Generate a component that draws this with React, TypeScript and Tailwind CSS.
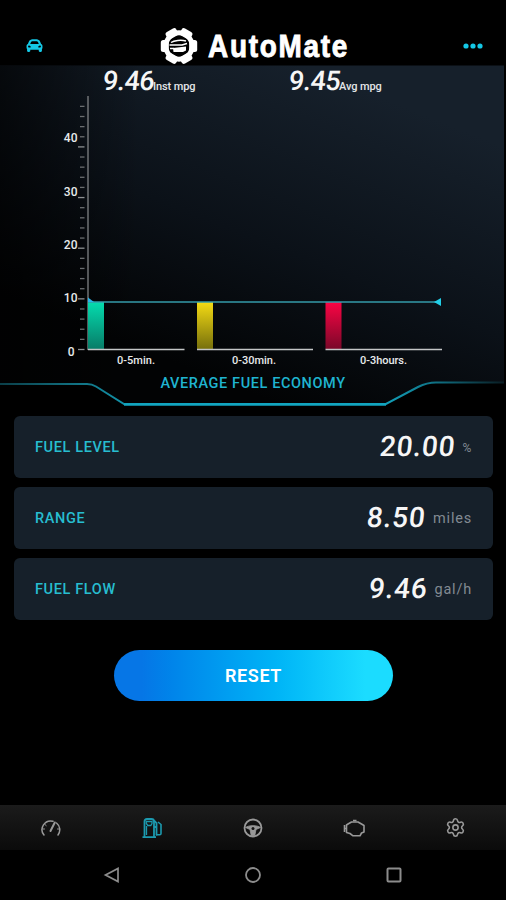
import type { ReactNode } from 'react';
import clsx from 'clsx';
import { FaCarAlt } from 'react-icons/fa';
import { Settings } from 'lucide-react';

type Stat = {
    label: string;
    value: string;
    unit: string;
};

type Bar = {
    label: string;
    x: number;
    end: number;
    labelX: number;
    labelWidth: number;
    fill: string;
};

const stats: Stat[] = [
    { label: 'FUEL LEVEL', value: '20.00', unit: '%' },
    { label: 'RANGE', value: '8.50', unit: 'miles' },
    { label: 'FUEL FLOW', value: '9.46', unit: 'gal/h' },
];

const bars: Bar[] = [
    { label: '0-5min.', x: 88, end: 184.5, labelX: 117, labelWidth: 38, fill: 'url(#barGreen)' },
    { label: '0-30min.', x: 197, end: 313, labelX: 232, labelWidth: 44, fill: 'url(#barYellow)' },
    { label: '0-3hours.', x: 325.5, end: 442, labelX: 360, labelWidth: 47, fill: 'url(#barRed)' },
];

const scale = [
    { value: '40', y: 76.5 },
    { value: '30', y: 130.5 },
    { value: '20', y: 183.5 },
    { value: '10', y: 237 },
    { value: '0', y: 290.5 },
];

const Logo = () => (
    <svg width="190" height="44" viewBox="160 24 190 44" fill="none" className="-mb-[3px] overflow-visible">
        {[30, 90, 150, 210, 270, 330].map((a) => (
            <rect key={a} x="173" y="27.8" width="12" height="8" rx="2.500" fill="#fff" transform={`rotate(${a} 179 46)`} />
        ))}
        <circle cx="179" cy="46" r="13.2" stroke="#fff" strokeWidth="5" />
        <path d="M171 42.500C174 40.500 181 39.500 186 41M169.500 45H182L187 43.500" stroke="#fff" strokeWidth="1.500" />
        <path d="M173 48L186 46.500V50.500L183 52H173.500Z" fill="#fff" />
        <path d="M170 48.500H174" stroke="#fff" strokeWidth="1.500" />
        <text
            x="208"
            y="57"
            textLength="141"
            lengthAdjust="spacingAndGlyphs"
            fill="#fff"
            stroke="#fff"
            strokeWidth="0.900"
            className="font-['Liberation_Sans_Narrow','Liberation_Sans',sans-serif] text-[32px] leading-none font-bold tracking-[2px]"
        >
            AutoMate
        </text>
    </svg>
);

const Digits = ({ children, className }: { children: ReactNode; className?: string }) => (
    <span className={clsx('inline-block -skew-x-6 font-medium text-[#f6f6f6]', className)}>{children}</span>
);

const Readout = ({ value, unit }: { value: string; unit: string }) => (
    <div className="flex items-baseline">
        <Digits className="w-[50px] text-[27px] leading-[32px] tracking-[-0.6px]">{value}</Digits>
        <span className="text-[11px] font-medium tracking-[-0.1px] whitespace-nowrap text-[#e4e6e8]">{unit}</span>
    </div>
);

const PanelFrame = () => (
    <svg className="absolute inset-0" width="506" height="344" viewBox="0 0 506 344" fill="none">
        <defs>
            <linearGradient id="panel" x1="300" y1="0" x2="180" y2="300" gradientUnits="userSpaceOnUse">
                <stop stopColor="#16202b" />
                <stop offset="0.55" stopColor="#0b1118" />
                <stop offset="1" stopColor="#020304" />
            </linearGradient>
            <linearGradient id="shade" x1="0" y1="0" x2="140" y2="0" gradientUnits="userSpaceOnUse">
                <stop stopColor="#000" stopOpacity="0.6" />
                <stop offset="1" stopColor="#000" stopOpacity="0" />
            </linearGradient>
            <linearGradient id="edge" x1="0" y1="0" x2="506" y2="0" gradientUnits="userSpaceOnUse">
                <stop stopColor="#0b3f49" />
                <stop offset="0.17" stopColor="#12788a" />
                <stop offset="0.3" stopColor="#12a5bf" />
                <stop offset="0.75" stopColor="#12a5bf" />
                <stop offset="0.87" stopColor="#0f6c7e" />
                <stop offset="1" stopColor="#0a1a20" />
            </linearGradient>
        </defs>
        <path d="M0 0.500H504V317.500H436C428 317.500 424 319 418 322L386 339H124L96 321.500Q92 319 87 319H0Z" fill="url(#panel)" />
        <path d="M0 0.500H140V319H0Z" fill="url(#shade)" />
        <path
            d="M0 319H87Q92 319 96 321.500L124 339H386L418 322C424 319 428 317.500 436 317.500H504"
            stroke="url(#edge)"
            strokeWidth="2"
        />
        <path d="M124 339.500H386" stroke="#12a5bf" strokeWidth="2.500" />
    </svg>
);

// Viewbox is offset by the height of the readout row above the plot.
const Chart = () => (
    <svg className="relative block" width="506" height="275" viewBox="0 30 506 275" fill="none">
        <defs>
            <linearGradient id="barGreen" x1="0" y1="0" x2="0" y2="1">
                <stop stopColor="#04dcae" />
                <stop offset="1" stopColor="#087c68" />
            </linearGradient>
            <linearGradient id="barYellow" x1="0" y1="0" x2="0" y2="1">
                <stop stopColor="#f5dc14" />
                <stop offset="1" stopColor="#77700c" />
            </linearGradient>
            <linearGradient id="barRed" x1="0" y1="0" x2="0" y2="1">
                <stop stopColor="#fb0444" />
                <stop offset="1" stopColor="#7a0829" />
            </linearGradient>
        </defs>
        {Array.from({ length: 25 }, (_, i) => {
            const y = 284.5 - i * 10.13;
            const major = i % 5 === 0;
            return (
                <path
                    key={i}
                    d={`M${major ? 78 : 80} ${y}H84.500`}
                    stroke={major ? '#8d9092' : '#6b6e70'}
                    strokeWidth="1.300"
                />
            );
        })}
        <path d="M88 31V285" stroke="#777a7c" strokeWidth="1.400" />
        {scale.map((s) => (
            <text key={s.value} x={s.value === '0' ? 74.5 : 77.5} y={s.y} textAnchor="end" fill="#e8eaeb" className="text-[12px] font-medium">
                {s.value}
            </text>
        ))}
        {bars.map((b) => (
            <g key={b.label}>
                <rect x={b.x} y="237" width="16" height="47" fill={b.fill} />
                <path d={`M${b.x} 284.500H${b.end}`} stroke="#c4c6c7" strokeWidth="1.400" />
                <text x={b.labelX} y="299" textLength={b.labelWidth} fill="#e8eaeb" className="text-[11px] font-medium">
                    {b.label}
                </text>
            </g>
        ))}
        <path d="M88 237H436" stroke="#359baa" strokeWidth="1.500" />
        <path d="M88 232.500L94 237H88Z" fill="#29b4ea" />
        <path d="M434 237L441 233V241Z" fill="#22cfe8" />
    </svg>
);

const StatRow = ({ label, value, unit }: Stat) => (
    <div className="flex h-[62px] items-center justify-between rounded-[6px] bg-[#16202a] px-[21px]">
        <span className="pt-[2px] text-[14.5px] font-medium tracking-[0.62px] text-[#27bdd0]">{label}</span>
        <div className="flex items-center">
            <Digits className="text-[28px] leading-[32px] tracking-[0.8px]">{value}</Digits>
            <span
                className={clsx(
                    'ml-[7px] pt-[2px] tracking-[0.8px] text-[#828a92]',
                    unit === '%' ? 'text-[12px]' : 'text-[14.500px]'
                )}
            >
                {unit}
            </span>
        </div>
    </div>
);

const GaugeIcon = () => (
    <svg width="22" height="20" viewBox="0 0 22 20" fill="none" stroke="#999" strokeWidth="1.500" strokeLinecap="round">
        <path d="M4 17A8.600 8.600 0 0 1 13 3.300M16.500 5A8.600 8.600 0 0 1 18 17" />
        <path d="M2.800 11H4.500M17.500 11H19.200M5 6.500L6.200 7.600" strokeWidth="1" />
        <path d="M14.800 4.500L10.500 13" strokeWidth="2" />
    </svg>
);

const FuelIcon = () => (
    <svg width="22" height="22" viewBox="0 0 22 22" fill="none" stroke="#1c9aaf" strokeWidth="1.800">
        <path d="M3.500 20V4.500Q3.500 2 6 2H10.500Q13 2 13 4.500V20M1.500 20.200H15" />
        <path d="M5.300 4.500H11V6.500L9.800 8.500H6.800L5.300 6.500ZM5.500 9V18" strokeWidth="1.300" />
        <path d="M13 3.500L15.500 6V18.500M13 10H15.500" />
        <path d="M17 5L20 7.500V16.500Q20 17.800 18.700 17.800H15" strokeWidth="1.600" />
    </svg>
);

const WheelIcon = () => (
    <svg width="20" height="20" viewBox="0 0 20 20" fill="none" stroke="#999">
        <circle cx="10" cy="10" r="8.500" strokeWidth="1.800" />
        <path d="M2.500 9.500C6 7 14 7 17.500 9.500L13 11.500L11.800 17.500H8.200L7 11.500Z" fill="#999" strokeWidth="0.800" />
        <circle cx="10" cy="10.500" r="1.500" fill="#161616" strokeWidth="0" />
    </svg>
);

const EngineIcon = () => (
    <svg width="24" height="20" viewBox="0 0 24 20" fill="none" stroke="#999" strokeWidth="1.600" strokeLinejoin="round">
        <path d="M6 6L9.500 4H16L19.500 6L22 7.500V14L19.500 15L18 17.800H11L8 15.500L4.500 14.500V7Z" />
        <path d="M2.500 7V14M2.500 10.500H4.500M11 2.500H14.500" />
    </svg>
);

const tabs = [
    { name: 'gauge', icon: <GaugeIcon /> },
    { name: 'fuel', icon: <FuelIcon /> },
    { name: 'drive', icon: <WheelIcon /> },
    { name: 'engine', icon: <EngineIcon /> },
    { name: 'settings', icon: <Settings size={21} strokeWidth={1.8} color="#999" /> },
];

const App = () => {
    return (
        <div className="flex h-[900px] w-[506px] flex-col overflow-hidden bg-black font-[Roboto,sans-serif]">
            <header className="flex h-[65px] shrink-0 items-end pr-[23px] pl-[26px]">
                <FaCarAlt size={17} color="#14c8e6" className="mb-[11px]" />
                <div className="ml-[117px]">
                    <Logo />
                </div>
                <svg width="20" height="6" viewBox="0 0 20 6" fill="#14c8e6" className="mb-[16px] ml-auto">
                    <circle cx="3" cy="3" r="2.600" />
                    <circle cx="10" cy="3" r="2.600" />
                    <circle cx="17" cy="3" r="2.600" />
                </svg>
            </header>

            <section className="relative h-[344px] shrink-0">
                <PanelFrame />
                <div className="relative flex h-[30px] pl-[103px]">
                    <div className="w-[186px]">
                        <Readout value="9.46" unit="Inst mpg" />
                    </div>
                    <Readout value="9.45" unit="Avg mpg" />
                </div>
                <Chart />
                <h2 className="relative text-center text-[14.5px] leading-[28px] font-medium tracking-[0.6px] text-[#1fb4d0]">
                    AVERAGE FUEL ECONOMY
                </h2>
            </section>

            <section className="mt-[6.5px] flex flex-col gap-[9px] pr-[13px] pl-[14px]">
                {stats.map((s) => (
                    <StatRow key={s.label} {...s} />
                ))}
            </section>

            <button className="mt-[30.5px] ml-[114px] h-[51px] w-[279px] shrink-0 rounded-full bg-linear-to-r from-[#0676e6] from-10% to-[#1bdcff] to-90% text-[18px] font-semibold tracking-[0.6px] text-white">
                RESET
            </button>

            <nav className="mt-auto grid h-[45px] shrink-0 grid-cols-5 bg-linear-to-b from-[#1b1b1b] to-[#0b0b0b]">
                {tabs.map((t) => (
                    <div key={t.name} className="flex items-center justify-center">
                        {t.icon}
                    </div>
                ))}
            </nav>

            <div className="flex h-[50px] shrink-0 items-center justify-between px-[103px]">
                <svg width="18" height="18" viewBox="0 0 18 18" fill="none" stroke="#8c8c8c" strokeWidth="1.700">
                    <path d="M2.500 9L15 2.500V15.500Z" />
                </svg>
                <svg width="18" height="18" viewBox="0 0 18 18" fill="none" stroke="#8c8c8c" strokeWidth="1.800">
                    <circle cx="9" cy="9" r="7" />
                </svg>
                <svg width="18" height="18" viewBox="0 0 18 18" fill="none" stroke="#8c8c8c" strokeWidth="2">
                    <rect x="2.500" y="2.500" width="13" height="13" rx="1" />
                </svg>
            </div>
        </div>
    );
};

export default App;
